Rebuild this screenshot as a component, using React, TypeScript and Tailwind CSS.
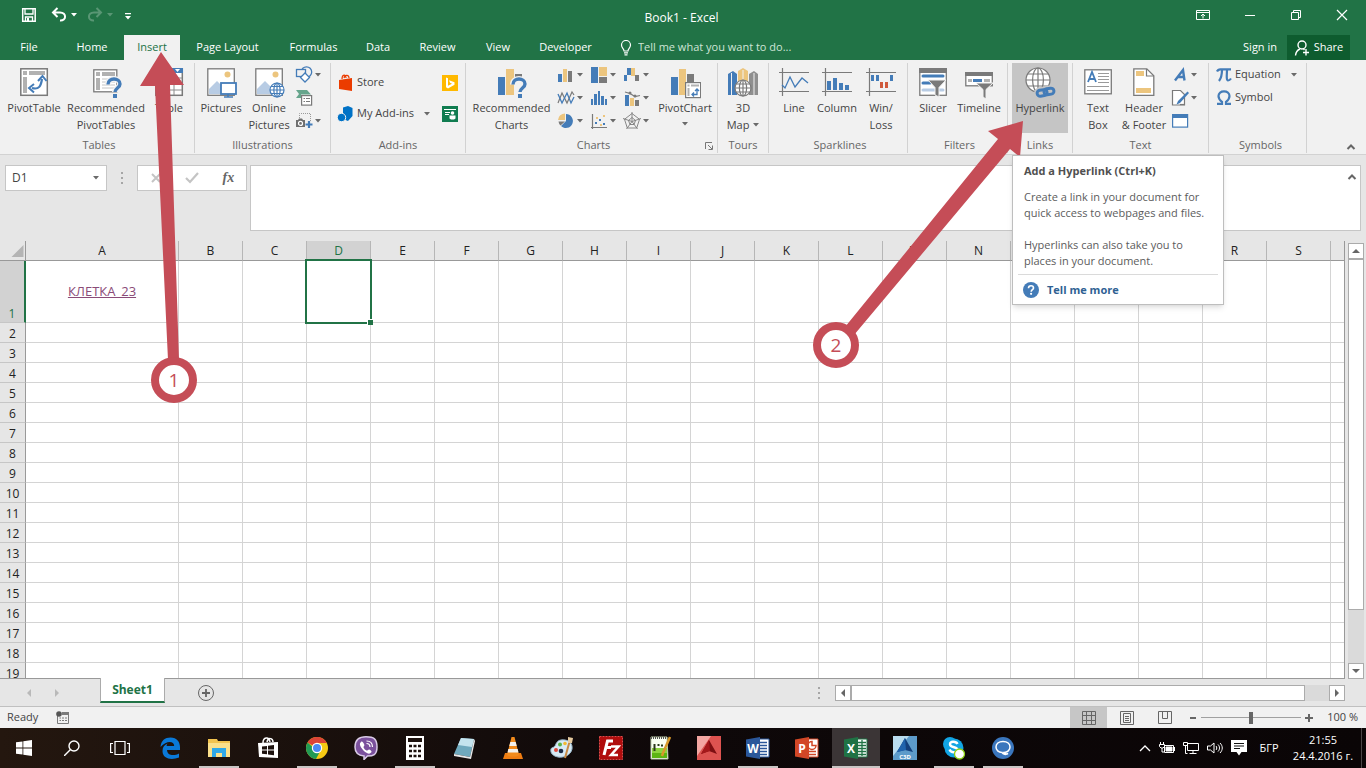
import { ReactNode } from "react";
import clsx from "clsx";

/* ---------- shared bits ---------- */

const BLUE = "#447cb8";
const GRAY = "#7a7a7a";
const SAND = "#ecc57e";

function Caret({ className = "" }: { className?: string }) {
  return (
    <svg viewBox="0 0 6 4" className={clsx("h-1 w-1.5 shrink-0", className)}>
      <path d="M0 0h6L3 3.5z" fill="#6a6a6a" />
    </svg>
  );
}

function Big({ children }: { children: ReactNode }) {
  return (
    <svg viewBox="0 0 32 32" className="h-8 w-8 shrink-0" fill="none">
      {children}
    </svg>
  );
}

function Small({ children }: { children: ReactNode }) {
  return (
    <svg viewBox="0 0 18 18" className="h-[18px] w-[18px] shrink-0" fill="none">
      {children}
    </svg>
  );
}

function Globe({ cx, cy, r, color }: { cx: number; cy: number; r: number; color: string }) {
  return (
    <g stroke={color} strokeWidth="1.2">
      <circle cx={cx} cy={cy} r={r} fill="#fff" />
      <ellipse cx={cx} cy={cy} rx={r * 0.45} ry={r} />
      <path d={`M${cx - r} ${cy}h${2 * r}M${cx} ${cy - r}v${2 * r}`} />
      <path d={`M${cx - r * 0.85} ${cy - r * 0.5}h${1.7 * r}M${cx - r * 0.85} ${cy + r * 0.5}h${1.7 * r}`} />
    </g>
  );
}

function Question({ x, y }: { x: number; y: number }) {
  const d = "M0 5.5C0 1.500 3 0 6 0s6 2 6 5c0 4-5 4-5 8";
  return (
    <g transform={`translate(${x} ${y})`}>
      <path d={d} stroke="#f1f1f1" strokeWidth="6" />
      <path d={d} stroke={BLUE} strokeWidth="3.4" />
      <rect x="5" y="15" width="4" height="4" fill={BLUE} />
    </g>
  );
}

/* ---------- ribbon icons ---------- */

const PivotTableIcon = () => (
  <Big>
    <rect x="2.8" y="1.8" width="26.5" height="26.5" fill="#fff" stroke={GRAY} strokeWidth="1.5" />
    <path d="M5 4h4v4H5zM11 4h16v4H11zM5 10h4v16H5z" fill="#b1b1b1" />
    <path d="M14 21c7 2 9-2 10-9" stroke={BLUE} strokeWidth="2.2" />
    <path d="M20 14l4.5-5 4 5M16 17l-5 4 5 4.5" stroke={BLUE} strokeWidth="2" />
  </Big>
);

const RecommendedPivotIcon = () => (
  <Big>
    <rect x="3.8" y="2.8" width="23" height="22" fill="#fff" stroke={GRAY} strokeWidth="1.3" />
    <path d="M6 5h4v4H6zM12 5h13v4H12zM6 11h4v12H6z" fill="#b1b1b1" />
    <path d="M12 12h13M12 15h13M12 18h13M12 21h13" stroke="#c4c4c4" />
    <Question x={18} y={12} />
  </Big>
);

const TableIcon = () => (
  <Big>
    <rect x="2.8" y="1.8" width="26.5" height="26.5" fill="#fff" stroke={GRAY} strokeWidth="1.5" />
    <rect x="2" y="1" width="28" height="5" fill={BLUE} />
    <path d="M3 11h26M3 17h26M3 23h26M12 6v22M21 6v22" stroke="#8c8c8c" />
    <path d="M22 2h5l-2.5 3z" fill="#fff" />
  </Big>
);

const Picture = () => (
  <>
    <rect x="2.8" y="1.8" width="26.5" height="26.5" fill="#fff" stroke={GRAY} strokeWidth="1.3" />
    <circle cx="22.5" cy="7.5" r="3" fill={SAND} />
    <path d="M4 27v-5l8-8 8 8v5z" fill="#b8cce4" />
  </>
);

const PicturesIcon = () => (
  <Big>
    <Picture />
    <rect x="16" y="16" width="15" height="11" fill="#fff" stroke={BLUE} strokeWidth="1.8" />
    <path d="M23 27v3M19 30h9" stroke={BLUE} strokeWidth="1.6" />
  </Big>
);

const OnlinePicturesIcon = () => (
  <Big>
    <Picture />
    <Globe cx={24} cy={23} r={7} color={BLUE} />
  </Big>
);

const ShapesIcon = () => (
  <Small>
    <circle cx="11.5" cy="6" r="5.2" stroke={BLUE} strokeWidth="1.3" />
    <rect x="1.5" y="3.5" width="9" height="7" fill="#f1f1f1" stroke={BLUE} strokeWidth="1.3" />
    <path d="M10 7l4.5 4.5L10 16l-4.5-4.5z" fill="#fff" stroke={BLUE} strokeWidth="1.3" />
  </Small>
);

const SmartArtIcon = () => (
  <Small>
    <path d="M1 1h11l4 4.5H6V9H1l3-4z" fill="#66a58c" />
    <rect x="6.6" y="6.6" width="10" height="9.5" fill="#fff" stroke={GRAY} strokeWidth="1.2" />
    <path d="M8.5 9.5H10M11 9.5h4M8.5 12.5H10M11 12.5h4" stroke={GRAY} />
  </Small>
);

const ScreenshotIcon = () => (
  <Small>
    <path d="M4.5 6V1.5h11V10" stroke="#9a9a9a" strokeDasharray="1 1" />
    <path d="M1 8h2l1-1.500h3L8 8h2v7H1z" fill="#6f6f6f" />
    <circle cx="5.5" cy="11.4" r="2" stroke="#fff" strokeWidth="1.2" />
    <path d="M14 9v7M10.5 12.5h7" stroke={BLUE} strokeWidth="2.2" />
  </Small>
);

const RecommendedChartsIcon = () => (
  <Big>
    <rect x="2" y="10" width="7" height="18" fill={BLUE} />
    <rect x="10" y="2" width="8" height="26" fill={SAND} />
    <rect x="19" y="7" width="7" height="4" fill={GRAY} />
    <Question x={17} y={12} />
  </Big>
);

const PivotChartIcon = () => (
  <Big>
    <rect x="2" y="10" width="7" height="18" fill={BLUE} />
    <rect x="10" y="2" width="7" height="26" fill={SAND} />
    <rect x="18" y="7" width="7" height="8" fill={GRAY} />
    <rect x="16.6" y="15.6" width="15" height="15" fill="#fff" stroke={GRAY} strokeWidth="1.2" />
    <path d="M18.5 17.5h2v2h-2zM22 17.5h8v2h-8zM18.5 21h2v8h-2z" fill="#b1b1b1" />
    <path d="M23.5 27.5H28V22.5M26 24l2-2 2 2M25 25.5l-2 2 2 2" stroke={BLUE} strokeWidth="1.3" />
  </Big>
);

const MapIcon = () => (
  <Big>
    <path d="M1 7l5-3 4 3v21H1z" fill={BLUE} />
    <path d="M11 4l5-3 5 3v24H11z" fill={SAND} />
    <path d="M22 7l5-3 4 3v21h-9z" fill="#8f8f8f" />
    <path d="M4.5 6v22M16 3v25M27 6v22" stroke="#f1f1f1" />
    <Globe cx={16} cy={21} r={8} color={GRAY} />
  </Big>
);

const SparkAxes = () => (
  <path d="M4.5 1v28M1 5.5h30M1 24.5h30" stroke={GRAY} strokeWidth="1.2" />
);

const LineSparkIcon = () => (
  <Big>
    <SparkAxes />
    <path d="M4 18l3 3 5-11 5 10 7-9 6 5" stroke={BLUE} strokeWidth="1.3" />
  </Big>
);

const ColumnSparkIcon = () => (
  <Big>
    <SparkAxes />
    <path d="M6 14h4v9H6zM12 11h4v12h-4zM18 16h4v7h-4zM24 18h4v5h-4z" fill={BLUE} />
  </Big>
);

const WinLossIcon = () => (
  <Big>
    <SparkAxes />
    <path d="M6 8h3v6H6zM11 8h3v6h-3zM25 8h3v6h-3z" fill={BLUE} />
    <path d="M15 15h3v6h-3zM20 15h3v6h-3z" fill="#d05a3c" />
  </Big>
);

const Funnel = () => (
  <path d="M11 13h18l-7 7.5V30l-4-2v-7.5z" fill={GRAY} stroke="#f1f1f1" strokeWidth="1" />
);

const SlicerIcon = () => (
  <Big>
    <rect x="2.8" y="1.8" width="26.5" height="26.5" fill="#fff" stroke={GRAY} strokeWidth="1.3" />
    <rect x="2" y="1" width="28" height="5" fill={GRAY} />
    <path d="M6 9h20M6 16h7" stroke={BLUE} strokeWidth="3" strokeLinecap="round" />
    <path d="M6 23h20" stroke="#b8cce4" strokeWidth="3" strokeLinecap="round" />
    <Funnel />
  </Big>
);

const TimelineIcon = () => (
  <Big>
    <rect x="2.8" y="5.8" width="26.5" height="13" fill="#fff" stroke={GRAY} strokeWidth="1.3" />
    <rect x="2" y="5" width="28" height="4" fill={GRAY} />
    <path d="M5 13.5h4M21 13.5h6" stroke="#b1b1b1" strokeWidth="3" />
    <path d="M10 13.5h9" stroke={BLUE} strokeWidth="3" />
    <path d="M13 16h17l-7 6.5V32l-3-2v-7.5z" fill={GRAY} stroke="#f1f1f1" strokeWidth="1" />
  </Big>
);

const HyperlinkIcon = () => (
  <Big>
    <Globe cx={14} cy={13} r={12} color={GRAY} />
    <g transform="rotate(-8 21 25)">
      <g stroke="#c5c5c5" strokeWidth="6">
        <rect x="13" y="22.5" width="9" height="6" rx="3" />
        <rect x="21" y="22" width="9" height="6" rx="3" />
      </g>
      <g stroke={BLUE} strokeWidth="3">
        <rect x="13" y="22.5" width="10" height="6" rx="3" />
        <rect x="20" y="22" width="10" height="6" rx="3" />
      </g>
    </g>
  </Big>
);

const TextBoxIcon = () => (
  <Big>
    <rect x="2.8" y="2.8" width="26.5" height="24" fill="#fff" stroke={GRAY} strokeWidth="1.3" />
    <path d="M6 15l4-10 4 10M7.5 12h5" stroke={BLUE} strokeWidth="1.8" />
    <path d="M16 6.5h11M16 9.5h11M16 12.5h11M16 15.5h11M5 19.5h22M5 23.5h22" stroke="#9a9a9a" />
  </Big>
);

const HeaderFooterIcon = () => (
  <Big>
    <path d="M5.8 1.8h13l7 7v19.5h-20z" fill="#fff" stroke={GRAY} strokeWidth="1.3" />
    <path d="M18.5 2v7H26" stroke={GRAY} strokeWidth="1.2" />
    <path d="M8 4h8v5H8zM8 21h15v5H8z" fill={SAND} />
  </Big>
);

const chartIcons: { label: string; icon: ReactNode }[] = [
  {
    label: "Column chart",
    icon: (
      <Small>
        <path d="M1 8h4v8H1z" fill={BLUE} />
        <path d="M6 3h4v13H6z" fill={SAND} />
        <path d="M11 5h4v11h-4z" fill={GRAY} />
      </Small>
    ),
  },
  {
    label: "Hierarchy chart",
    icon: (
      <Small>
        <path d="M1 1h7v16H1z" fill={BLUE} />
        <path d="M9 1h8v9H9z" fill={SAND} />
        <path d="M9 11h8v6H9z" fill={GRAY} />
      </Small>
    ),
  },
  {
    label: "Waterfall chart",
    icon: (
      <Small>
        <path d="M1 9h3v6H1zM4 2h4v7H4z" fill={BLUE} />
        <path d="M8 2h4v8H8z" fill={SAND} />
        <path d="M12 9h4v6h-4z" fill={GRAY} />
      </Small>
    ),
  },
  {
    label: "Line chart",
    icon: (
      <Small>
        <path d="M1 14L5 4l5 10 5-11 2 3" stroke={GRAY} strokeWidth="1.2" />
        <path d="M1 5l4 9 5-10 4 10 3-6" stroke={BLUE} strokeWidth="1.3" />
      </Small>
    ),
  },
  {
    label: "Statistic chart",
    icon: (
      <Small>
        <path d="M1 10h2v6H1zM4 5h3v11H4zM8 2h2v14H8zM11 7h3v9h-3zM15 10h2v6h-2z" fill={BLUE} />
      </Small>
    ),
  },
  {
    label: "Combo chart",
    icon: (
      <Small>
        <path d="M2 6h4v11H2z" fill={BLUE} />
        <path d="M7 9h4v8H7z" fill={SAND} />
        <path d="M12 11h4v6h-4z" fill={GRAY} />
        <path d="M2 3l5 1.5 5 3 5-1" stroke={GRAY} strokeWidth="1.2" />
        <circle cx="7" cy="4" r="1.5" fill={GRAY} />
        <circle cx="12" cy="7" r="1.5" fill={GRAY} />
      </Small>
    ),
  },
  {
    label: "Pie chart",
    icon: (
      <Small>
        <path d="M9 9V2a7 7 0 11-5 12z" fill={BLUE} />
        <path d="M8 8V1.5A7 7 0 001 8z" fill={SAND} />
        <path d="M8 9.5H1.5A7 7 0 003.5 13.5z" fill={GRAY} />
      </Small>
    ),
  },
  {
    label: "Scatter chart",
    icon: (
      <Small>
        <path d="M2.5 2v13.5H17M1 15.5h2M2.5 17v-2" stroke={GRAY} strokeWidth="1.2" />
        <path d="M5 10h2v2H5zM9 7h2v2H9zM13 11h2v2h-2z" fill={BLUE} />
        <path d="M6 5h2v2H6zM13 3h2v2h-2zM10 12h2v2h-2z" fill={SAND} />
      </Small>
    ),
  },
  {
    label: "Radar chart",
    icon: (
      <Small>
        <path d="M9 1.5l7.5 5.8L13.7 16H4.3L1.5 7.3zM9 5.5l3.500 3-1.500 4h-4L5.500 8.500z" stroke={GRAY} strokeWidth=".9" />
        <path d="M9 0v9M18 6.500L9 9.500M14.500 17L9 9.500M3.500 17L9 9.500M0 6.500l9 3" stroke={GRAY} strokeWidth=".9" />
      </Small>
    ),
  },
];

/* ---------- ribbon parts ---------- */

interface GroupProps {
  label: string;
  className: string;
  launcher?: boolean;
  children: ReactNode;
}

function Group({ label, className, launcher, children }: GroupProps) {
  return (
    <section
      aria-label={label}
      className={clsx(
        "relative flex h-[90px] shrink-0 flex-col justify-between border-r border-[#d2d2d2]",
        className
      )}
    >
      <div className="flex h-[70px]">{children}</div>
      <div className="flex h-4 items-center justify-center text-[#666]">
        {launcher && <span className="w-4" />}
        <span className="flex-1 text-center leading-4">{label}</span>
        {launcher && (
          <button aria-label={`${label} dialog`} className="w-3 pt-0.5">
            <svg viewBox="0 0 8 8" className="h-2 w-2" fill="none" stroke="#777">
              <path d="M.5 7V.5H7M3 3l4 4M7.5 3.5v4h-4" />
            </svg>
          </button>
        )}
      </div>
    </section>
  );
}

interface BigButtonProps {
  icon: ReactNode;
  lines: string[];
  className: string;
  caret?: boolean;
}

function BigButton({ icon, lines, className, caret }: BigButtonProps) {
  return (
    <button className={clsx("flex h-[70px] shrink-0 flex-col items-center pt-1", className)}>
      {icon}
      {lines.map((line, i) => (
        <span key={line} className="flex items-center gap-1 leading-[17px] whitespace-nowrap">
          {line}
          {caret && i > 0 && <Caret />}
        </span>
      ))}
      {caret && lines.length === 1 && <Caret className="mt-1.5" />}
    </button>
  );
}

function SmallButton({ icon, label, caret = true }: { icon: ReactNode; label: string; caret?: boolean }) {
  return (
    <button aria-label={label} className="flex h-[23px] w-[33px] items-center gap-0.5">
      {icon}
      {caret && <Caret />}
    </button>
  );
}

function HyperlinkTip() {
  return (
    <div
      role="tooltip"
      className="absolute top-[92px] left-1 z-20 w-[212px] border border-[#bebebe] bg-white px-[5px] pb-1 text-[#5c5c5c] shadow-md"
    >
      <div className="px-1.5 pt-[7px] leading-4 whitespace-nowrap">
        <p className="font-bold text-[#505050]">Add a Hyperlink (Ctrl+K)</p>
        <p className="mt-2.5">
          Create a link in your document for
          <br />
          quick access to webpages and files.
        </p>
        <p className="mt-4 pb-[5px]">
          Hyperlinks can also take you to
          <br />
          places in your document.
        </p>
      </div>
      <a
        href="#help"
        className="flex items-center gap-2 border-t border-[#dadada] px-[5px] pt-[7px] pb-0.5 leading-4 font-bold text-[#2f6193]"
      >
        <svg viewBox="0 0 16 16" className="h-4 w-4" fill="none">
          <circle cx="8" cy="8" r="8" fill={BLUE} />
          <path d="M5.5 6.2C5.5 4.5 6.5 3.7 8 3.7s2.5.9 2.5 2.2c0 1.700-2.300 1.800-2.300 3.800" stroke="#fff" strokeWidth="1.6" />
          <circle cx="8.1" cy="11.8" r="1.1" fill="#fff" />
        </svg>
        Tell me more
      </a>
    </div>
  );
}

function Ribbon() {
  return (
    <div className="flex border-b border-[#d2d2d2] bg-[#f1f1f1] pt-[3px] pb-px text-[#444]">
      <Group label="Tables" className="w-[195px] pl-1">
        <BigButton className="w-[60px]" icon={<PivotTableIcon />} lines={["PivotTable"]} />
        <BigButton className="w-[84px]" icon={<RecommendedPivotIcon />} lines={["Recommended", "PivotTables"]} />
        <BigButton className="w-[42px]" icon={<TableIcon />} lines={["Table"]} />
      </Group>

      <Group label="Illustrations" className="w-[136px]">
        <BigButton className="w-[52px]" icon={<PicturesIcon />} lines={["Pictures"]} />
        <BigButton className="w-[44px]" icon={<OnlinePicturesIcon />} lines={["Online", "Pictures"]} />
        <div className="flex flex-col pl-1">
          <SmallButton label="Shapes" icon={<ShapesIcon />} />
          <SmallButton label="SmartArt" icon={<SmartArtIcon />} caret={false} />
          <SmallButton label="Screenshot" icon={<ScreenshotIcon />} />
        </div>
      </Group>

      <Group label="Add-ins" className="w-[135px]">
        <div className="flex flex-1 flex-col pt-1 pr-[7px] pl-1.5">
          <div className="flex h-[31px] items-center justify-between">
            <button className="flex items-center gap-0.5">
              <Small>
                <path d="M2 6l13-2v13L2 15z" fill="#eb3c00" />
                <path d="M5 5c0-5 4-5 4-1M7 4c1-4 5-3 5 0" stroke="#eb3c00" strokeWidth="1.2" />
              </Small>
              Store
            </button>
            <button aria-label="Bing Maps">
              <svg viewBox="0 0 16 16" className="h-4 w-4">
                <path d="M0 0h16v16H0z" fill="#ffb900" />
                <path d="M4 2.5l2 .7v7.500l4-2-2-1-1-2.500 5.500 2v2.500L6 13.500l-2-1.300z" fill="#fff" />
              </svg>
            </button>
          </div>
          <div className="flex h-[31px] items-center">
            <button className="flex flex-1 items-center gap-0.5 whitespace-nowrap">
              <Small>
                <path d="M6 2.5L11 1l4.500 2v8L11 16l-5-2z" fill="#0072c6" />
                <circle cx="4.5" cy="12.5" r="4.2" fill="#0072c6" stroke="#f1f1f1" />
              </Small>
              My Add-ins
              <Caret className="ml-2" />
            </button>
            <button aria-label="People Graph">
              <svg viewBox="0 0 16 16" className="h-4 w-4">
                <path d="M0 0h16v16H0z" fill="#107c50" />
                <path d="M2 3h12v1H2zM3 6h5v1H3zM3 8h4v1H3z" fill="#fff" />
                <circle cx="10.5" cy="7" r="1.8" fill="#fff" />
                <path d="M7.5 9.5h6v3l-1.500 1h-3l-1.500-1z" fill="#fff" />
              </svg>
            </button>
          </div>
        </div>
      </Group>

      <Group label="Charts" className="w-[252px]" launcher>
        <BigButton className="w-[91px]" icon={<RecommendedChartsIcon />} lines={["Recommended", "Charts"]} />
        <div className="grid grid-cols-3">
          {chartIcons.map((c) => (
            <SmallButton key={c.label} label={c.label} icon={c.icon} />
          ))}
        </div>
        <BigButton className="w-[58px]" icon={<PivotChartIcon />} lines={["PivotChart"]} caret />
      </Group>

      <Group label="Tours" className="w-[51px]">
        <BigButton className="w-[50px]" icon={<MapIcon />} lines={["3D", "Map"]} caret />
      </Group>

      <Group label="Sparklines" className="w-[139px] pl-1">
        <BigButton className="w-[42px]" icon={<LineSparkIcon />} lines={["Line"]} />
        <BigButton className="w-[44px]" icon={<ColumnSparkIcon />} lines={["Column"]} />
        <BigButton className="w-[44px]" icon={<WinLossIcon />} lines={["Win/", "Loss"]} />
      </Group>

      <Group label="Filters" className="w-[100px] pl-1">
        <BigButton className="w-[42px]" icon={<SlicerIcon />} lines={["Slicer"]} />
        <BigButton className="w-[50px]" icon={<TimelineIcon />} lines={["Timeline"]} />
      </Group>

      <Group label="Links" className="w-[65px] pr-1 pl-1">
        <BigButton className="w-[56px] bg-[#c5c5c5]" icon={<HyperlinkIcon />} lines={["Hyperlink"]} />
        <HyperlinkTip />
      </Group>

      <Group label="Text" className="w-[136px]">
        <BigButton className="w-[50px]" icon={<TextBoxIcon />} lines={["Text", "Box"]} />
        <BigButton className="w-[42px]" icon={<HeaderFooterIcon />} lines={["Header", "& Footer"]} />
        <div className="flex flex-col pl-1.5">
          <SmallButton
            label="WordArt"
            icon={
              <Small>
                <path d="M4 14.5L12 4l1.500 10.500M7 11h6" stroke={BLUE} strokeWidth="2.4" />
              </Small>
            }
          />
          <SmallButton
            label="Signature Line"
            icon={
              <Small>
                <path d="M1.500 1.500h8l4 4V16h-12z" fill="#fff" stroke={GRAY} strokeWidth="1.2" />
                <path d="M16.500 2.500L18 4l-9 10-3.500 1.500L7 12z" fill={BLUE} />
                <path d="M9 15.500h5" stroke={GRAY} strokeWidth="1.2" />
              </Small>
            }
          />
          <SmallButton
            label="Object"
            caret={false}
            icon={
              <Small>
                <rect x="1.6" y="2.6" width="15" height="12.5" fill="#fff" stroke={BLUE} strokeWidth="1.2" />
                <path d="M1 2h16v4H1z" fill={BLUE} />
              </Small>
            }
          />
        </div>
      </Group>

      <Group label="Symbols" className="w-[98px] pl-1.5">
        <div className="flex flex-col">
          <button className="flex h-[23px] items-center gap-0.5">
            <Small>
              <path
                d="M2 5.5C3 3 4 3.3 6 3.3h10M7 3.5c0 5-1 9-3 11.5M12 3.5c0 4-1 11 1 11 1.500 0 2-.5 3-2"
                stroke={BLUE}
                strokeWidth="2.2"
              />
            </Small>
            Equation
            <Caret className="ml-2" />
          </button>
          <button className="flex h-[23px] items-center gap-0.5">
            <Small>
              <path
                d="M2 14.8h5v-2C4.5 11 3.500 9 3.500 7c0-3 2.500-4.700 5.500-4.700S14.500 4 14.500 7c0 2-1 4-3.500 5.800v2h5"
                stroke={BLUE}
                strokeWidth="2.2"
              />
            </Small>
            Symbol
          </button>
        </div>
      </Group>

      <button aria-label="Collapse the ribbon" className="mr-2.5 ml-auto self-end pb-0.5">
        <ChevronUp className="h-2 w-2.5" />
      </button>
    </div>
  );
}

function ChevronUp({ className }: { className: string }) {
  return (
    <svg viewBox="0 0 10 8" className={className} fill="none">
      <path d="M1.500 6L5 2.500 8.500 6" stroke="#666" strokeWidth="2" />
    </svg>
  );
}

/* ---------- title bar and tabs ---------- */

const tabs = [
  { name: "Home", width: "w-16" },
  { name: "Insert", width: "w-14", active: true },
  { name: "Page Layout", width: "w-[95px]" },
  { name: "Formulas", width: "w-[77px]" },
  { name: "Data", width: "w-[52px]" },
  { name: "Review", width: "w-[67px]" },
  { name: "View", width: "w-[54px]" },
  { name: "Developer", width: "w-[81px]" },
];

function TitleBar() {
  return (
    <header className="bg-[#217346] text-white">
      <div className="flex h-[35px] items-center">
        <div className="flex flex-1 items-center pb-1.5 pl-[21px]">
          <button aria-label="Save">
            <svg viewBox="0 0 16 16" className="h-4 w-4" fill="none" stroke="#fff">
              <path d="M1.700 1.700h12.500v12.500H1.700z" strokeWidth="1.5" />
              <path d="M4 2v5h8V2" strokeWidth="1.3" />
              <path d="M4.500 14v-4h7v4" strokeWidth="1.3" />
              <path d="M6 11h2v3H6z" fill="#fff" stroke="none" />
            </svg>
          </button>
          <button aria-label="Undo" className="ml-3.5 flex items-center gap-1">
            <svg viewBox="0 0 16 16" className="h-4 w-4" fill="none" stroke="#fff" strokeWidth="2">
              <path d="M6.500 1L2 5.500 6.500 10M2.500 5.500H9c7 0 6.500 8.500 0 8" />
            </svg>
            <svg viewBox="0 0 6 4" className="h-1 w-1.5">
              <path d="M0 0h6L3 3.500z" fill="#fff" />
            </svg>
          </button>
          <button aria-label="Redo" className="ml-2.5 flex items-center gap-1 opacity-25" disabled>
            <svg viewBox="0 0 16 16" className="h-4 w-4" fill="none" stroke="#fff" strokeWidth="2">
              <path d="M9.500 1L14 5.500 9.500 10M13.500 5.500H7c-7 0-6.500 8.500 0 8" />
            </svg>
            <svg viewBox="0 0 6 4" className="h-1 w-1.5">
              <path d="M0 0h6L3 3.500z" fill="#fff" />
            </svg>
          </button>
          <button aria-label="Customize Quick Access Toolbar" className="ml-3 pt-1">
            <svg viewBox="0 0 6 7" className="h-[7px] w-1.5">
              <path d="M0 0h6v1.200H0zM0 3h6L3 6.500z" fill="#fff" />
            </svg>
          </button>
        </div>
        <h1 className="mr-1.5 text-xs">Book1 - Excel</h1>
        <div className="flex flex-1 items-center justify-end gap-[34px] pr-[18px] pb-1.5">
          <button aria-label="Ribbon Display Options">
            <svg viewBox="0 0 14 12" className="h-3 w-3.5" fill="none" stroke="#fff">
              <path d="M.5 1.500h13v9H.5zM.5 3.500h13M7 9.500V5.500M5 7l2-2 2 2" />
            </svg>
          </button>
          <button aria-label="Minimize">
            <svg viewBox="0 0 12 12" className="h-3 w-3" fill="none" stroke="#fff">
              <path d="M1 6.500h10" />
            </svg>
          </button>
          <button aria-label="Restore Down">
            <svg viewBox="0 0 12 12" className="h-3 w-3" fill="none" stroke="#fff">
              <path d="M1.500 3.500h7v7h-7zM3.500 3.500v-2h7v7h-2" />
            </svg>
          </button>
          <button aria-label="Close">
            <svg viewBox="0 0 12 12" className="h-3 w-3" fill="none" stroke="#fff" strokeWidth="1.2">
              <path d="M1 1l10 10M11 1L1 11" />
            </svg>
          </button>
        </div>
      </div>
      <nav className="flex h-[25px] items-center">
        <button className="w-[60px] pr-0.5 text-center">File</button>
        {tabs.map((tab) => (
          <button
            key={tab.name}
            className={clsx(
              "h-full text-center whitespace-nowrap",
              tab.width,
              tab.active && "bg-[#f1f1f1] text-[#217346]"
            )}
          >
            {tab.name}
          </button>
        ))}
        <label className="ml-3.5 flex flex-1 items-center gap-1.5">
          <svg viewBox="0 0 12 16" className="h-4 w-3" fill="none" stroke="#fff" strokeWidth="1.2">
            <path d="M4 11C4 8.500 1.500 8 1.500 5a4.500 4.500 0 019 0C10.500 8 8 8.500 8 11zM4 12.800h4M4.500 14.800h3" />
          </svg>
          <input
            type="text"
            aria-label="Tell me what you want to do"
            placeholder="Tell me what you want to do..."
            className="w-[200px] bg-transparent outline-none placeholder:text-[#cfe5d6]"
          />
        </label>
        <button className="mr-2.5">Sign in</button>
        <button className="mr-4 flex h-full w-[63px] items-center justify-center gap-1 bg-[#0e5c2f]">
          <svg viewBox="0 0 16 16" className="h-4 w-4" fill="none" stroke="#fff" strokeWidth="1.4">
            <circle cx="8" cy="5" r="4" />
            <path d="M1.500 15.500c.3-3.500 2-5.500 4.500-6.500M9.500 9l1 1M12 9v6.500M9 12.500h6" />
          </svg>
          Share
        </button>
      </nav>
    </header>
  );
}

function Grip({ className }: { className: string }) {
  return (
    <span className={clsx("flex flex-col gap-[3px]", className)}>
      <i className="h-0.5 w-0.5 bg-[#a6a6a6]" />
      <i className="h-0.5 w-0.5 bg-[#a6a6a6]" />
      <i className="h-0.5 w-0.5 bg-[#a6a6a6]" />
    </span>
  );
}

function FormulaBar() {
  return (
    <div className="flex items-start px-[5px] py-2.5">
      <div className="flex h-[26px] w-[102px] items-center border border-[#c6c6c6] bg-white px-1.5">
        <input aria-label="Name Box" defaultValue="D1" className="w-full min-w-0 text-xs text-[#444] outline-none" />
        <Caret className="w-2" />
      </div>
      <Grip className="h-[26px] w-[30px] items-center justify-center" />
      <div className="flex h-[26px] w-[110px] items-center justify-around border border-[#c6c6c6] bg-white">
        <button aria-label="Cancel">
          <svg viewBox="0 0 12 12" className="h-3 w-3" fill="none" stroke="#c4c4c4" strokeWidth="2">
            <path d="M2 2l8 8M10 2l-8 8" />
          </svg>
        </button>
        <button aria-label="Enter">
          <svg viewBox="0 0 14 12" className="h-3 w-3.5" fill="none" stroke="#c4c4c4" strokeWidth="2.2">
            <path d="M1 6l4 4 8-9" />
          </svg>
        </button>
        <button
          aria-label="Insert Function"
          className="font-['Liberation_Serif',serif] text-sm leading-4 font-bold text-[#666] italic"
        >
          fx
        </button>
      </div>
      <div className="ml-[3px] flex h-[66px] flex-1 border border-[#c6c6c6] bg-white">
        <textarea aria-label="Formula Bar" className="flex-1 resize-none p-1 outline-none" />
        <button aria-label="Collapse Formula Bar" className="mt-[7px] mr-[3px] self-start">
          <ChevronUp className="h-2 w-2.5" />
        </button>
      </div>
    </div>
  );
}

/* ---------- sheet ---------- */

const columns = "ABCDEFGHIJKLMNOPQRS".split("");
const rows = Array.from({ length: 19 }, (_, i) => i + 1);

function Sheet() {
  return (
    <div className="min-w-0 flex-1 overflow-hidden border-r border-b border-[#999] bg-white">
      <table className="w-full table-fixed border-separate border-spacing-0 text-xs">
        <colgroup>
          <col className="w-[26px]" />
          <col className="w-[153px]" />
          {columns.slice(1).map((c) => (
            <col key={c} className="w-16" />
          ))}
          <col />
        </colgroup>
        <thead>
          <tr className="h-5 bg-[#e6e6e6] text-[#222]">
            <th className="border-r border-b border-[#999] p-0">
              <svg viewBox="0 0 12 12" className="ml-auto h-3 w-[15px]">
                <path d="M12 0v12H0z" fill="#b4b4b4" />
              </svg>
            </th>
            {columns.map((c) => (
              <th
                key={c}
                scope="col"
                className={clsx(
                  "border-r border-b border-r-[#b6b6b6] border-b-[#999] p-0 leading-[19px] font-normal",
                  c === "D" && "bg-[#d2d2d2] text-[#217346]"
                )}
              >
                {c}
              </th>
            ))}
            <th className="border-b border-[#999] p-0" />
          </tr>
        </thead>
        <tbody>
          {rows.map((r) => (
            <tr key={r} className={r === 1 ? "h-[62px]" : "h-5"}>
              <th
                scope="row"
                className={clsx(
                  "border-r border-b border-b-[#c6c6c6] px-0 pt-[3px] pb-0 leading-4 font-normal",
                  r === 1
                    ? "border-r-2 border-r-[#217346] bg-[#d2d2d2] align-bottom text-[#217346]"
                    : "border-r-[#999] bg-[#e6e6e6] text-[#222]"
                )}
              >
                {r}
              </th>
              {columns.map((c) => (
                <td key={c} className="relative border-r border-b border-[#d4d4d4] p-0 text-center">
                  {r === 1 && c === "A" && (
                    <a href="#cell23" className="text-[13px] text-[#8a4b78] underline">
                      КЛЕТКА_23
                    </a>
                  )}
                  {r === 1 && c === "D" && (
                    <div className="absolute -inset-0.5 z-10 border-2 border-[#217346]">
                      <i className="absolute -right-[3px] -bottom-[3px] h-1.5 w-1.5 border-t border-l border-white bg-[#217346]" />
                    </div>
                  )}
                </td>
              ))}
              <td className="border-b border-[#d4d4d4] p-0" />
            </tr>
          ))}
        </tbody>
      </table>
    </div>
  );
}

function ScrollArrow({ label, d }: { label: string; d: string }) {
  return (
    <button
      aria-label={label}
      className="flex h-4 w-4 shrink-0 items-center justify-center border border-[#ababab] bg-white"
    >
      <svg viewBox="0 0 8 8" className="h-2 w-2">
        <path d={d} fill="#666" />
      </svg>
    </button>
  );
}

function VerticalScroll() {
  return (
    <div className="flex w-[21px] flex-col items-center pt-0.5">
      <ScrollArrow label="Scroll up" d="M4 2l4 4H0z" />
      <div className="flex w-4 flex-1 flex-col bg-[#dadada]">
        <div className="h-[87%] border border-[#ababab] bg-white" />
      </div>
      <ScrollArrow label="Scroll down" d="M0 2h8L4 6z" />
    </div>
  );
}

function SheetTabs() {
  return (
    <div className="flex h-[27px]">
      <div className="flex w-[100px] items-center gap-[22px] pl-[26px]">
        <button aria-label="Previous sheet">
          <svg viewBox="0 0 6 8" className="h-2 w-1.5">
            <path d="M5 0v8L1 4z" fill="#b9b9b9" />
          </svg>
        </button>
        <button aria-label="Next sheet">
          <svg viewBox="0 0 6 8" className="h-2 w-1.5">
            <path d="M1 0v8l4-4z" fill="#b9b9b9" />
          </svg>
        </button>
      </div>
      <button className="-mt-px h-[25px] w-[65px] border-x border-b-2 border-x-[#ababab] border-b-[#217346] bg-white text-xs font-bold text-[#217346]">
        Sheet1
      </button>
      <button aria-label="New sheet" className="ml-[33px]">
        <svg viewBox="0 0 16 16" className="h-4 w-4" fill="none" stroke="#666">
          <circle cx="8" cy="8" r="7.5" />
          <path d="M8 4v8M4 8h8" strokeWidth="1.8" />
        </svg>
      </button>
      <div className="ml-auto flex w-[527px] items-center">
        <Grip className="w-[17px]" />
        <ScrollArrow label="Scroll left" d="M6 0v8L2 4z" />
        <div className="flex h-4 flex-1 bg-[#dadada]">
          <div className="w-[95%] border border-[#ababab] bg-white" />
        </div>
        <ScrollArrow label="Scroll right" d="M2 0v8l4-4z" />
      </div>
      <div className="w-[21px]" />
    </div>
  );
}

function StatusBar() {
  return (
    <footer className="flex h-[22px] items-center border-t border-[#c0c0c0] bg-[#f1f1f1] pr-2 pl-[7px] text-[#444]">
      <span>Ready</span>
      <button aria-label="Record macro" className="ml-[18px]">
        <svg viewBox="0 0 14 14" className="h-3.5 w-3.5" fill="none">
          <path d="M1.500 5v7.500h11V2.500H7" stroke={GRAY} />
          <path d="M6 1h7v3H6z" fill={GRAY} />
          <path d="M3.500 7H5M6 7h2M9 7h2M3.500 9.500H5M6 9.500h2M9 9.500h2" stroke={GRAY} />
          <circle cx="3" cy="3" r="2.8" fill="#555" />
        </svg>
      </button>
      <div className="ml-auto flex h-full items-center">
        <button aria-label="Normal view" className="flex h-full w-[37px] items-center justify-center bg-[#c6c6c6]">
          <svg viewBox="0 0 14 14" className="h-3.5 w-3.5" fill="none" stroke="#666">
            <path d="M.5.5h13v13H.5zM.5 4.500h13M.5 9.500h13M4.500.5v13M9.500.5v13" />
          </svg>
        </button>
        <button aria-label="Page Layout view" className="flex h-full w-10 items-center justify-center">
          <svg viewBox="0 0 14 14" className="h-3.5 w-3.5" fill="none" stroke="#666">
            <path d="M.5.5h13v13H.5zM3.500 2.500h7v9h-7zM5 5.500h4M5 7.500h4M5 9.500h4" />
          </svg>
        </button>
        <button aria-label="Page Break Preview" className="flex h-full w-9 items-center justify-center">
          <svg viewBox="0 0 14 14" className="h-3.5 w-3.5" fill="none" stroke="#666">
            <path d="M.5.5h13v12H.5zM4.500.5v7h5v-7" />
          </svg>
        </button>
        <button aria-label="Zoom out" className="ml-1 flex h-4 w-3 items-center justify-center">
          <i className="h-0.5 w-1.5 bg-[#666]" />
        </button>
        <input
          type="range"
          aria-label="Zoom"
          min={0}
          max={200}
          defaultValue={100}
          className="mx-0.5 h-3 w-[100px] appearance-none bg-[linear-gradient(#a0a0a0,#a0a0a0)] bg-[length:100%_1px] bg-center bg-no-repeat [&::-webkit-slider-thumb]:h-3 [&::-webkit-slider-thumb]:w-1 [&::-webkit-slider-thumb]:appearance-none [&::-webkit-slider-thumb]:bg-[#666]"
        />
        <button aria-label="Zoom in" className="flex h-4 w-3 items-center justify-center">
          <svg viewBox="0 0 8 8" className="h-2 w-2" stroke="#666" strokeWidth="2">
            <path d="M4 0v8M0 4h8" />
          </svg>
        </button>
        <span className="ml-3 whitespace-nowrap">100 %</span>
      </div>
    </footer>
  );
}

/* ---------- taskbar ---------- */

function OfficeIcon({ letter, color, children }: { letter: string; color: string; children: ReactNode }) {
  return (
    <>
      <path d="M13 3h10v18H13z" fill="#fff" stroke={color} />
      {children}
      <path d="M0 3.500L14 1v22L0 20.500z" fill={color} />
      <text x="7" y="16.5" fill="#fff" fontSize="12" fontWeight="700" textAnchor="middle">
        {letter}
      </text>
    </>
  );
}

interface TaskApp {
  name: string;
  running?: boolean;
  active?: boolean;
  icon: ReactNode;
}

const apps: TaskApp[] = [
  {
    name: "Edge",
    icon: (
      <path
        d="M2.500 11C3 4.500 7 1.500 12.500 1.500c6.500 0 9.500 4.500 9.500 9.500v3H9c.3 6 7.500 6 12 3.500v4C13.500 24.500 4.500 23 4.500 15c0-4 2-6 5-7.500-1 1.200-.8 2.500-.8 2.500h7.500c0-5-7.500-6-13.700 1z"
        fill="#0a79d8"
      />
    ),
  },
  {
    name: "File Explorer",
    running: true,
    icon: (
      <>
        <path d="M1 3h9l1 2h12v16H1z" fill="#f2c34f" />
        <path d="M1 7h22v14H1z" fill="#fbe08b" />
        <path d="M5 12h14v9h-4v-4H9v4H5z" fill="#2fa8e8" />
      </>
    ),
  },
  {
    name: "Store",
    icon: (
      <>
        <path d="M2 7l20-1v16L3 21z" fill="#fff" />
        <path d="M7 7c0-6 6-7 7-1M11 6c1-5 6-4 6 0" stroke="#fff" strokeWidth="1.5" />
        <path d="M6 10.500l5-.6v3.600H6zM12 9.800l6-.8v4.500h-6zM6 14.500h5v3.800l-5-.5zM12 14.500h6v4.700l-6-.8z" fill="#1c110d" />
      </>
    ),
  },
  {
    name: "Chrome",
    running: true,
    icon: (
      <>
        <circle cx="12" cy="12" r="11" fill="#f6c914" />
        <path d="M12 12L2.500 6.500A11 11 0 0112 1c4.500 0 8 2.500 9.800 6H12z" fill="#dc4437" />
        <path d="M2.500 6.500A11 11 0 0011 23l4.500-8.500H12z" fill="#219a55" />
        <circle cx="12" cy="12" r="5.2" fill="#fff" />
        <circle cx="12" cy="12" r="4" fill="#4a8af4" />
      </>
    ),
  },
  {
    name: "Viber",
    icon: (
      <>
        <path
          d="M12 .8c8 0 11 2 11 10.200S19 20 13.500 20L10 23.500V20C4 19.500 1 17 1 11S4 .8 12 .8z"
          fill="#7b519d"
          stroke="#d9cbe6"
          strokeWidth="1.5"
        />
        <path
          d="M7 6c1-1 2 0 3 2s-.5 2-.5 3 2 3.500 3.500 3.500 1-1 2-1 3 1.500 2.500 2.500-2 2-3.500 1.500C10 16 7 12 6 9c-.3-1 0-2 1-3z"
          fill="#fff"
        />
        <path d="M12.500 5c4 0 6 2 6 6M12.500 7.500c2.500 0 3.500 1.300 3.500 3.500" stroke="#fff" strokeWidth="1.2" />
      </>
    ),
  },
  {
    name: "Calculator",
    running: true,
    icon: (
      <>
        <path d="M3 0h18v24H3z" fill="#fff" />
        <path d="M5 2h14v4H5z" fill="#1c110d" />
        <path d="M6 10h12M6 15h12M6 20h12" stroke="#1c110d" strokeWidth="2.6" strokeDasharray="3 1.5" />
      </>
    ),
  },
  {
    name: "Notepad",
    icon: (
      <>
        <path d="M9 2l13 1-4 18-16-3z" fill="#6fa9bd" />
        <path d="M9 2l13 1-2 8L6 9z" fill="#c5e4ee" />
        <path d="M2 18l16 3 4-18 1 2-4 18-17-3z" fill="#e8e8e8" />
      </>
    ),
  },
  {
    name: "VLC",
    icon: (
      <>
        <path d="M4 17h16l2 6H2z" fill="#ef7d12" />
        <path d="M10.500 1h3L18 19c-2 2-10 2-12 0z" fill="#f28b1c" />
        <path d="M9.300 6h5.400l1 4H8.300zM7.300 13h9.400l.8 3.500H6.500z" fill="#f4f1ec" />
      </>
    ),
  },
  {
    name: "Paint",
    icon: (
      <>
        <path
          d="M11 4c7-1 12 3 11 9-1 6-8 9-14 8-5-1-8-4-7-8 .5-2 3-1 4-3s2-5.500 6-6z"
          fill="#d7eaf5"
          stroke="#9ab8cb"
        />
        <circle cx="6" cy="14" r="2" fill="#e0493c" />
        <circle cx="10" cy="8.5" r="2" fill="#5ab34c" />
        <circle cx="15" cy="7.5" r="1.8" fill="#f3b932" />
        <circle cx="11" cy="15" r="2.3" fill="#1c2b45" />
        <path d="M20 4l-5 18" stroke="#c98a45" strokeWidth="2" />
        <path d="M18 1l5 1-1 5h-4z" fill="#e6cba0" />
      </>
    ),
  },
  {
    name: "FileZilla",
    icon: (
      <>
        <path d="M.5.5h23v23H.5z" fill="#b00d0d" stroke="#e04a4a" strokeDasharray="2 1" />
        <path d="M5 19L8.500 5H14M7 11.500h5" stroke="#fff" strokeWidth="3" />
        <path d="M12 10.500h7.500L12 19h7" stroke="#fff" strokeWidth="2.5" />
      </>
    ),
  },
  {
    name: "Notepad++",
    icon: (
      <>
        <path d="M3 1h16l1 22H3z" fill="#fafff2" stroke="#b9c9a6" />
        <path d="M4 12h15v10H4z" fill="#8ed43f" />
        <path d="M4 17h15v5H4z" fill="#5cb512" />
        <path d="M3 2h16" stroke="#555" strokeWidth="2" strokeDasharray="1 1" />
        <path d="M6.500 8v7M9.500 9h2M13 9.500h2" stroke="#2c3a1c" strokeWidth="2" />
        <path d="M22 1l-7 16-1 3" stroke="#d99a2b" strokeWidth="2.5" />
      </>
    ),
  },
  {
    name: "AutoCAD",
    icon: (
      <>
        <path d="M0 0h24v24H0z" fill="#dd5350" />
        <path d="M0 0h14L0 20z" fill="#f3a7a2" />
        <path d="M12 4l8 14-8-3-8 3z" fill="#7d0f12" />
        <path d="M12 4l1 11-9 3z" fill="#a5191b" />
      </>
    ),
  },
  {
    name: "Word",
    running: true,
    icon: (
      <OfficeIcon letter="W" color="#2b579a">
        <path d="M14 6.500h7M14 9.500h7M14 12.500h7M14 15.500h7M14 18.500h7" stroke="#2b579a" strokeWidth="1.3" />
      </OfficeIcon>
    ),
  },
  {
    name: "PowerPoint",
    icon: (
      <OfficeIcon letter="P" color="#d24726">
        <path d="M17 5.500a4 4 0 104 4h-4zM14 15.500h7M14 18.500h7" stroke="#d24726" strokeWidth="1.5" />
      </OfficeIcon>
    ),
  },
  {
    name: "Excel",
    running: true,
    active: true,
    icon: (
      <OfficeIcon letter="X" color="#1f7244">
        <path d="M14 6.500h8M14 9.500h8M14 12.500h8M14 15.500h8M14 18.500h8M18 4v16" stroke="#1f7244" strokeWidth="1.3" />
      </OfficeIcon>
    ),
  },
  {
    name: "Civil 3D",
    icon: (
      <>
        <path d="M0 0h24v24H0z" fill="#5d9bca" />
        <path d="M0 0h16L0 20z" fill="#b9dcef" />
        <path d="M12 2l8 14-8-2-8 2z" fill="#123f7c" />
        <path d="M12 2l1 12-9 2z" fill="#1f63ad" />
        <text x="12" y="23" fill="#fff" fontSize="6" fontWeight="700" textAnchor="middle">
          C3D
        </text>
      </>
    ),
  },
  {
    name: "Skype",
    running: true,
    icon: (
      <>
        <circle cx="8" cy="8" r="7" fill="#12a5e4" />
        <circle cx="12" cy="12" r="9.5" fill="#12a5e4" />
        <path
          d="M15.500 8C14 5 7.500 5 8 8.500c.5 3.500 8 2 7.500 5.500-.5 3-6.500 3-8-.5"
          stroke="#fff"
          strokeWidth="2.4"
        />
        <circle cx="17.5" cy="18" r="5" fill="#fff" stroke="#8fd115" strokeWidth="1.3" />
      </>
    ),
  },
  {
    name: "Messenger",
    running: true,
    icon: (
      <>
        <circle cx="12" cy="12" r="11" fill="#3a76bd" />
        <path
          d="M12 5.500c4.500 0 7 2.500 7 5.500s-2.500 5.500-6 5.500c1 1.500 3 1.500 4 1-2 1.500-5 1-6-1-3.500 0-6-2.500-6-5.500s2.500-5.500 7-5.500z"
          stroke="#fff"
          strokeWidth="1.5"
        />
      </>
    ),
  },
];

function Taskbar() {
  return (
    <div className="flex h-10 shrink-0 bg-linear-to-r from-[#24170f] via-[#0e0809] to-[#0a0506] text-white">
      <button aria-label="Start" className="flex w-12 items-center justify-center">
        <svg viewBox="0 0 16 16" className="h-4 w-4" fill="#fff">
          <path d="M0 2.300L6.500 1.400v6.200H0zM7.300 1.300L16 0v7.600H7.300zM0 8.400h6.500v6.200L0 13.700zM7.300 8.400H16V16l-8.700-1.300z" />
        </svg>
      </button>
      <button aria-label="Search" className="flex w-12 items-center justify-center">
        <svg viewBox="0 0 16 16" className="h-4 w-4" fill="none" stroke="#fff" strokeWidth="1.4">
          <circle cx="10" cy="6" r="5" />
          <path d="M6.500 9.500L0 16" />
        </svg>
      </button>
      <button aria-label="Task View" className="flex w-12 items-center justify-center">
        <svg viewBox="0 0 20 16" className="h-4 w-5" fill="none" stroke="#fff" strokeWidth="1.2">
          <path d="M5 1.500h10v13H5zM3 3.500H.6v9H3M17 3.500h2.400v9H17" />
        </svg>
      </button>
      <div className="ml-0.5 flex gap-px">
        {apps.map((app) => (
          <button
            key={app.name}
            aria-label={app.name}
            className={clsx("flex w-12 flex-col items-center justify-between pt-2", app.active && "bg-[#3b3536]")}
          >
            <svg viewBox="0 0 24 24" className="h-6 w-6" fill="none">
              {app.icon}
            </svg>
            <i className={clsx("h-0.5", app.active ? "w-12" : "w-10", app.running && "bg-[#c9c5c4]")} />
          </button>
        ))}
      </div>
      <div className="ml-auto flex items-center gap-2">
        <svg viewBox="0 0 12 8" className="h-2 w-3" fill="none" stroke="#fff" strokeWidth="1.3">
          <path d="M1 7l5-5 5 5" />
        </svg>
        <svg viewBox="0 0 16 14" className="h-3.5 w-4" fill="none" stroke="#fff">
          <path d="M5.500 4.500h9v7h-9z" />
          <path d="M7 6h6v4H7zM15 6.500h1v3h-1z" fill="#fff" />
          <path d="M1.500 1v2M4.500 1v2M.5 3.500h5v2L4 7H2L.5 5.500zM3 7v4h2" />
        </svg>
        <svg viewBox="0 0 16 14" className="h-3.5 w-4" fill="none" stroke="#fff">
          <path d="M4.500 2.500h11v7h-11zM10 9.500v3M6.500 12.500h7M.5 1.500h4v3h-4zM2.500 4.500v8h2" />
        </svg>
        <svg viewBox="0 0 16 14" className="h-3.5 w-4" fill="none" stroke="#fff">
          <path d="M.5 5h3L7 2v10L3.500 9h-3zM9 5c1 1 1 3 0 4M11 3.500c2 2 2 5 0 7M13 2c3 3 3 7 0 10" />
        </svg>
        <svg viewBox="0 0 16 16" className="h-4 w-4">
          <path d="M0 0h16v12h-5.500L8 15.500 5.500 12H0z" fill="#fff" />
          <path d="M3 3.500h10M3 6h10M3 8.500h6" stroke="#111" strokeWidth="1.2" />
        </svg>
        <button className="ml-0.5 w-6 text-center">БГР</button>
        <div className="w-[68px] text-center leading-4 whitespace-nowrap">
          <div>21:55</div>
          <div>24.4.2016 г.</div>
        </div>
        <div className="-ml-1 h-10 w-[5px] border-l border-[#4a4546]" />
      </div>
    </div>
  );
}

/* ---------- numbered callouts over the window ---------- */

function Callout({ n, cx, cy, arrow }: { n: number; cx: number; cy: number; arrow: string }) {
  return (
    <g>
      <polygon points={arrow} fill="#c54d57" />
      <circle cx={cx} cy={cy} r="19" fill="#fff" stroke="#c54d57" strokeWidth="8" />
      <text
        x={cx}
        y={cy + 7}
        fill="#c54d57"
        fontSize="19"
        textAnchor="middle"
        className="font-['Liberation_Sans_Narrow','Open_Sans',sans-serif]"
      >
        {n}
      </text>
    </g>
  );
}

export default function App() {
  return (
    <div className="relative flex h-screen flex-col overflow-hidden bg-[#e6e6e6] font-['Open_Sans','Noto_Sans',sans-serif] text-[11px]">
      <TitleBar />
      <Ribbon />
      <FormulaBar />
      <main className="flex min-h-0 flex-1">
        <Sheet />
        <VerticalScroll />
      </main>
      <SheetTabs />
      <StatusBar />
      <Taskbar />
      <svg
        viewBox="0 0 1100 420"
        className="pointer-events-none absolute top-0 left-0 z-10 h-[420px] w-[1100px]"
      >
        <Callout n={1} cx={174} cy={380} arrow="161,52 184,85 170,85 179,360 168,360 155,86 140,86" />
        <Callout n={2} cx={836} cy={345} arrow="1023,121 1020,157 1010,149 854,335 845,327 998,139 988,131" />
      </svg>
    </div>
  );
}
